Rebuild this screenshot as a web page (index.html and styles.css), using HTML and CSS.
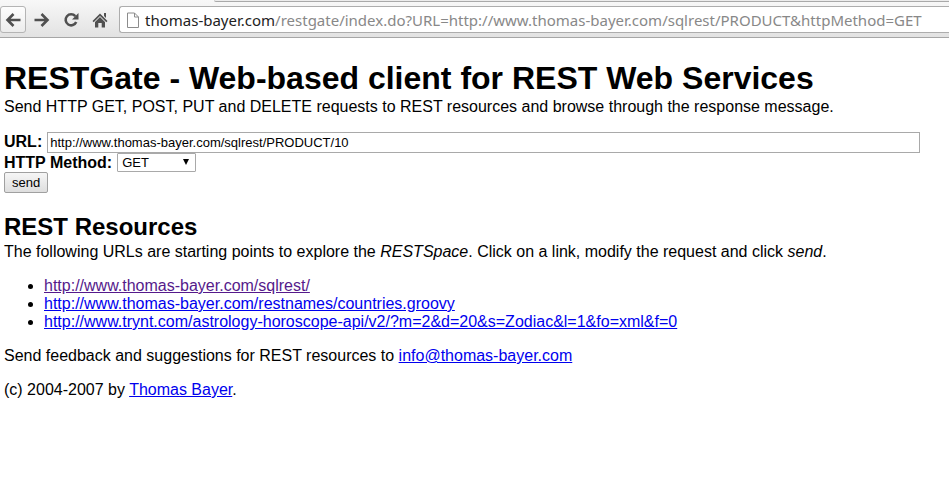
FILE: index.html
```html
<!DOCTYPE html>
<html lang="en">
<head>
<meta charset="utf-8">
<title>RESTGate</title>
<link rel="stylesheet" href="styles.css">
</head>
<body>
<header class="browser">
  <div class="tabstrip"><div class="tab"></div><div class="tabgap"></div></div>
  <div class="toolbar">
    <button class="nav boxed" type="button" aria-label="Back"><svg width="16" height="16" viewBox="0 0 16 16"><path d="M15.500 8H3M8.500 2L2.500 8L8.500 14" fill="none" stroke="#505050" stroke-width="2.600"/></svg></button>
    <button class="nav" type="button" aria-label="Forward"><svg width="16" height="16" viewBox="0 0 16 16"><path d="M0.500 8H13M7.500 2L13.500 8L7.500 14" fill="none" stroke="#505050" stroke-width="2.600"/></svg></button>
    <button class="nav" type="button" aria-label="Reload"><svg width="16" height="16" viewBox="0 0 16 16"><path d="M12.300 4.200A5.500 5.500 0 1 0 13.200 10" fill="none" stroke="#505050" stroke-width="2.600"/><path d="M15.500 1V7.500H9z" fill="#505050"/></svg></button>
    <button class="nav" type="button" aria-label="Home"><svg width="16" height="16" viewBox="0 0 16 16"><path d="M0.500 9L8 1.500L15.500 9L14.300 10.200L8 4L1.700 10.200z" fill="#505050"/><path d="M12 1h2v5l-2-2zM3 10L8 5L13 10V15.500H9.700V11H6.300V15.500H3z" fill="#505050"/></svg></button>
    <div class="omnibox">
      <svg class="page-icon" width="12" height="16" viewBox="0 0 12 16"><path d="M1 1h6.500L11.500 5v10.500H.5V1zM7.500 1v4h4" fill="#fff" stroke="#8c8c8c"/></svg>
      <span class="address"><span class="host">thomas-bayer.com</span>/restgate/index.do?URL=http://www.thomas-bayer.com/sqlrest/PRODUCT&amp;httpMethod=GET</span>
    </div>
  </div>
</header>
<main>
  <h1>RESTGate - Web-based client for REST Web Services</h1>
  <p>Send HTTP GET, POST, PUT and DELETE requests to REST resources and browse through the response message.</p>
  <form>
    <div class="row"><label for="url">URL:</label><input id="url" type="text" value="http://www.thomas-bayer.com/sqlrest/PRODUCT/10"></div>
    <div class="row"><label for="method">HTTP Method:</label><span class="select-wrap"><select id="method"><option>GET</option><option>POST</option><option>PUT</option><option>DELETE</option></select><svg class="arrow" width="6" height="6" viewBox="0 0 6 6"><path d="M0 0h6L3 6z"/></svg></span></div>
    <button class="send" type="button">send</button>
  </form>
  <h2>REST Resources</h2>
  <p>The following URLs are starting points to explore the <i>RESTSpace</i>. Click on a link, modify the request and click <i>send</i>.</p>
  <ul>
    <li><a class="visited" href="#">http://www.thomas-bayer.com/sqlrest/</a></li>
    <li><a href="#">http://www.thomas-bayer.com/restnames/countries.groovy</a></li>
    <li><a href="#">http://www.trynt.com/astrology-horoscope-api/v2/?m=2&amp;d=20&amp;s=Zodiac&amp;l=1&amp;fo=xml&amp;f=0</a></li>
  </ul>
  <p class="spaced">Send feedback and suggestions for REST resources to <a href="#">info@thomas-bayer.com</a></p>
  <p class="spaced">(c) 2004-2007 by <a href="#">Thomas Bayer</a>.</p>
</main>
</body>
</html>
```
FILE: styles.css
```css
* { box-sizing: border-box; }
body {
  margin: 0;
  background: #fff;
  color: #000;
  font: 16px/18px "Liberation Sans", Arial, sans-serif;
}
.browser {
  background: linear-gradient(#f8f8f8, #e2e2e2);
  border-bottom: 1px solid #a6a6a6;
}
.tabstrip { display: flex; height: 2px; }
.tab { width: 214px; }
.tabgap {
  flex: 1;
  background: #ececec;
  border-bottom: 1px solid #a9a9a9;
  border-bottom-left-radius: 2px;
}
.toolbar {
  display: flex;
  align-items: center;
  gap: 3px;
  padding: 4px 0;
}
.nav {
  display: flex;
  align-items: center;
  justify-content: center;
  width: 26px;
  height: 27px;
  padding: 0;
  border: 1px solid transparent;
  border-radius: 3px;
  background: none;
}
.boxed {
  border-color: #b4b4b4;
  background: linear-gradient(#fdfdfd, #ececec);
}
.omnibox {
  display: flex;
  align-items: center;
  flex: 1;
  min-width: 0;
  height: 27px;
  margin-left: 3px;
  padding-left: 7px;
  gap: 6px;
  overflow: hidden;
  border: 1px solid #adadad;
  border-right: 0;
  border-radius: 3px 0 0 3px;
  background: #fff;
}
.page-icon { flex: none; }
.address {
  color: #888;
  font: 15px/24px "Noto Sans", "Open Sans", sans-serif;
  white-space: nowrap;
}
.host { color: #222; }
main { padding: 20px 4px; }
h1, h2, p { margin: 0; }
h1 { font-size: 32px; line-height: 40px; }
h2 { margin-top: 18px; font-size: 24px; line-height: 32px; }
form { margin-top: 16px; }
.row { display: flex; gap: 5px; }
label { font-weight: bold; line-height: 20px; height: 19px; }
input {
  flex: 1;
  min-width: 0;
  height: 21px;
  margin-right: 25px;
  padding: 1px 2px;
  border: 1px solid #a9a9a9;
  background: #fff;
  color: #000;
  font: 13px "Liberation Sans", Arial, sans-serif;
}
.select-wrap { position: relative; display: flex; }
select {
  width: 79px;
  height: 19px;
  padding: 0 4px;
  appearance: none;
  border: 1px solid #a9a9a9;
  border-radius: 1px;
  background: #fff;
  color: #000;
  font: 13px "Liberation Sans", Arial, sans-serif;
}
.arrow { position: absolute; top: 6px; right: 7px; pointer-events: none; }
.send {
  display: block;
  height: 21px;
  padding: 0 7px;
  border: 1px solid #a0a0a0;
  border-radius: 2px;
  background: linear-gradient(#f6f6f6, #dedede);
  color: #000;
  font: 13px "Liberation Sans", Arial, sans-serif;
}
ul { margin: 16px 0; padding-left: 40px; }
a { color: #0000ee; }
.visited { color: #551a8b; }
.spaced { margin-top: 16px; }
```
